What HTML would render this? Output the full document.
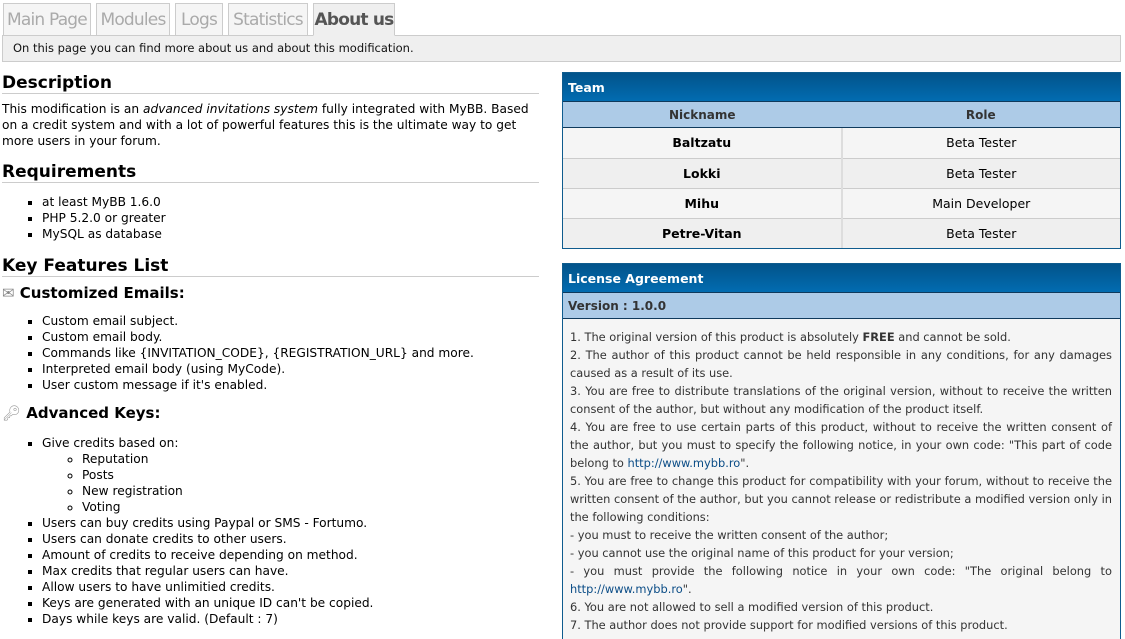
<!DOCTYPE html>
<html><head><meta charset="utf-8"><style>
*{box-sizing:border-box}
body{margin:0;width:1125px;height:626px;overflow:hidden;background:#fff;font-family:"DejaVu Sans","Liberation Sans",sans-serif;font-size:12.2px;color:#000}
.tab{position:absolute;top:3px;height:33px;border:1px solid #ccc;border-bottom:none;background:#f5f5f5;color:#aaa;font-size:17px;line-height:32px;text-align:center;letter-spacing:-0.8px;white-space:nowrap;overflow:hidden}
.bar{position:absolute;top:35px;left:2px;width:1119px;height:27px;border:1px solid #ccc;background:#efefef;font-size:11.5px;line-height:25px;padding-left:10px;color:#111}
.left{position:absolute;left:2px;top:70px;width:537px}
h2{font-size:17px;margin:0;border-bottom:1px solid #ccc;height:24px;line-height:26px}
p{margin:0;line-height:16px}
ul{margin:0;padding-left:40px;list-style:square;line-height:16px}
ul ul{list-style:circle;padding-left:40px}
h3{font-size:15px;margin:0;line-height:20px}
.box{position:absolute;left:562px;width:559px;border:1px solid #0f5c8e}
.hd{height:29px;background:linear-gradient(#02538a,#026cb1);color:#fff;font-weight:bold;font-size:12.5px;line-height:29px;padding-left:5px;border-bottom:1px solid #0f3a5c}
.th{height:26px;background:#adcbe7;color:#333;font-weight:bold;font-size:12px;line-height:26px;border-bottom:1px solid #0f3a5c}
table{border-collapse:collapse;width:100%}
td{height:30px;text-align:center;font-size:12.5px;border-bottom:1px solid #ccc}
td.a{border-right:2px solid #ddd}
.lic{background:#f5f5f5;color:#333;font-size:11.4px;line-height:18px;padding:9px 8px 0 7px;text-align:justify;height:320px}
a{color:#0a4c86;text-decoration:none}
</style></head><body>
<div class="tab" style="left:3px;width:88px">Main Page</div>
<div class="tab" style="left:96px;width:74px">Modules</div>
<div class="tab" style="left:175px;width:48px">Logs</div>
<div class="tab" style="left:228px;width:80px">Statistics</div>
<div class="tab" style="left:313px;width:82px;background:#efefef;color:#555;font-weight:bold;height:33px;z-index:2;border-bottom:1px solid #efefef">About us</div>
<div class="bar">On this page you can find more about us and about this modification.</div>
<div class="left">
<h2>Description</h2>
<p style="margin-top:7px">This modification is an <i>advanced invitations system</i> fully integrated with MyBB. Based on a credit system and with a lot of powerful features this is the ultimate way to get more users in your forum.</p>
<h2 style="margin-top:10px">Requirements</h2>
<ul style="margin-top:11px"><li>at least MyBB 1.6.0</li><li>PHP 5.2.0 or greater</li><li>MySQL as database</li></ul>
<h2 style="margin-top:11px">Key Features List</h2>
<h3 style="margin-top:6px"><span style="font-weight:normal;color:#888;font-size:15px">✉</span> Customized Emails:</h3>
<ul style="margin-top:10px"><li>Custom email subject.</li><li>Custom email body.</li><li>Commands like {INVITATION_CODE}, {REGISTRATION_URL} and more.</li><li>Interpreted email body (using MyCode).</li><li>User custom message if it's enabled.</li></ul>
<h3 style="margin-top:10px"><span style="font-weight:normal;color:#999">🔑︎</span> Advanced Keys:</h3>
<ul style="margin-top:12px"><li>Give credits based on:<ul><li>Reputation</li><li>Posts</li><li>New registration</li><li>Voting</li></ul></li><li>Users can buy credits using Paypal or SMS - Fortumo.</li><li>Users can donate credits to other users.</li><li>Amount of credits to receive depending on method.</li><li>Max credits that regular users can have.</li><li>Allow users to have unlimitied credits.</li><li>Keys are generated with an unique ID can't be copied.</li><li>Days while keys are valid. (Default : 7)</li></ul>
</div>
<div class="box" style="top:72px">
<div class="hd">Team</div>
<div class="th" style="display:flex"><div style="width:50%;text-align:center">Nickname</div><div style="width:50%;text-align:center">Role</div></div>
<table>
<tr style="background:#f5f5f5"><td class="a" style="width:50%"><b>Baltzatu</b></td><td>Beta Tester</td></tr>
<tr style="background:#efefef"><td class="a"><b>Lokki</b></td><td>Beta Tester</td></tr>
<tr style="background:#f5f5f5"><td class="a"><b>Mihu</b></td><td>Main Developer</td></tr>
<tr style="background:#efefef"><td class="a" style="border-bottom:none"><b>Petre-Vitan</b></td><td style="border-bottom:none">Beta Tester</td></tr>
</table>
</div>
<div class="box" style="top:263px;border-bottom:none">
<div class="hd">License Agreement</div>
<div class="th" style="padding-left:5px">Version : 1.0.0</div>
<div class="lic">1. The original version of this product is absolutely <b>FREE</b> and cannot be sold.<br>2. The author of this product cannot be held responsible in any conditions, for any damages caused as a result of its use.<br>3. You are free to distribute translations of the original version, without to receive the written consent of the author, but without any modification of the product itself.<br>4. You are free to use certain parts of this product, without to receive the written consent of the author, but you must to specify the following notice, in your own code: "This part of code belong to <a>http://www.mybb.ro</a>".<br>5. You are free to change this product for compatibility with your forum, without to receive the written consent of the author, but you cannot release or redistribute a modified version only in the following conditions:<br>- you must to receive the written consent of the author;<br>- you cannot use the original name of this product for your version;<br>- you must provide the following notice in your own code: "The original belong to <a>http://www.mybb.ro</a>".<br>6. You are not allowed to sell a modified version of this product.<br>7. The author does not provide support for modified versions of this product.</div>
</div>
</body></html>
